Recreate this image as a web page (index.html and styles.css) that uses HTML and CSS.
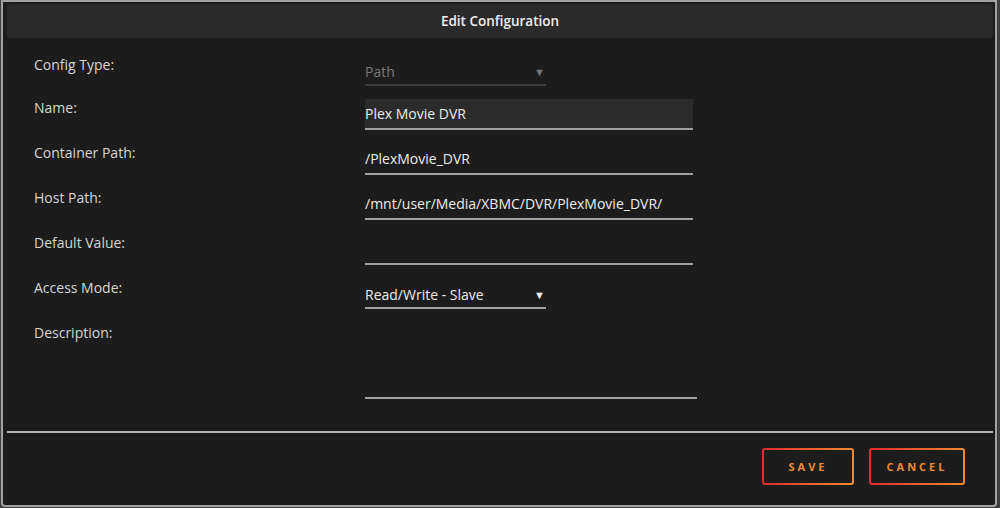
FILE: index.html
```html
<!DOCTYPE html>
<html lang="en">
<head>
    <meta charset="UTF-8">
    <title>Edit Configuration</title>
    <link rel="stylesheet" href="styles.css">
</head>
<body>
    <div class="dialog">
        <div class="dialog-title">Edit Configuration</div>
        <div class="config-form">
            <div class="form-row first">
                <label>Config Type:</label>
                <div class="select-box disabled">
                    <span>Path</span>
                    <span class="arrow">&#9660;</span>
                </div>
            </div>
            <div class="form-row">
                <label for="nameField">Name:</label>
                <input type="text" id="nameField" class="text-field active" value="Plex Movie DVR" autofocus>
            </div>
            <div class="form-row">
                <label for="containerField">Container Path:</label>
                <input type="text" id="containerField" class="text-field" value="/PlexMovie_DVR">
            </div>
            <div class="form-row">
                <label for="hostField">Host Path:</label>
                <input type="text" id="hostField" class="text-field" value="/mnt/user/Media/XBMC/DVR/PlexMovie_DVR/">
            </div>
            <div class="form-row">
                <label for="defaultField">Default Value:</label>
                <input type="text" id="defaultField" class="text-field" value="">
            </div>
            <div class="form-row">
                <label>Access Mode:</label>
                <div class="select-box">
                    <span>Read/Write - Slave</span>
                    <span class="arrow">&#9660;</span>
                </div>
            </div>
            <div class="form-row desc">
                <label for="descField">Description:</label>
                <textarea id="descField" class="text-area"></textarea>
            </div>
        </div>
        <div class="dialog-buttons">
            <button class="grad-button save">SAVE</button>
            <button class="grad-button cancel">CANCEL</button>
        </div>
    </div>
</body>
</html>
```

FILE: styles.css
```css
html, body {
    margin: 0;
    padding: 0;
}
body {
    background-color: #3e3e3e;
    font-family: 'Open Sans', 'Liberation Sans', sans-serif;
    width: 1000px;
    height: 508px;
    overflow: hidden;
}
.dialog {
    box-sizing: border-box;
    width: 996px;
    height: 507px;
    margin-left: 1px;
    background-color: #1c1c1c;
    border: 2px solid #a2a2a2;
    border-radius: 0 0 4px 4px;
    display: flex;
    flex-direction: column;
}
.dialog-title {
    margin: 2px 2px 0 4px;
    height: 34px;
    line-height: 34px;
    background-color: #2a2a2a;
    border-radius: 4px;
    text-align: center;
    color: #f0f0f0;
    font-size: 13.5px;
    font-weight: 600;
}
.config-form {
    padding: 14px 0 0 27px;
    border-bottom: 2px solid #b4b4b4;
    margin: 0 2px 0 4px;
    padding-bottom: 31px;
}
.form-row {
    display: grid;
    grid-template-columns: 331px 328px;
    height: 45px;
}
.form-row.first {
    height: 43px;
}
.form-row label {
    color: #d6d6d6;
    font-size: 14px;
    line-height: 26px;
}
.text-field {
    box-sizing: border-box;
    margin-top: 4px;
    height: 31px;
    width: 328px;
    padding: 0;
    background: transparent;
    border: none;
    border-bottom: 2px solid #a0a0a0;
    color: #ececec;
    font-family: inherit;
    font-size: 14px;
    outline: none;
    caret-color: #ffffff;
}
.text-field.active {
    background-color: #2b2b2b;
}
.select-box {
    box-sizing: border-box;
    margin-top: 4px;
    height: 30px;
    width: 181px;
    border-bottom: 2px solid #a0a0a0;
    display: flex;
    align-items: center;
    justify-content: space-between;
    color: #ececec;
    font-size: 14px;
    padding-top: 2px;
}
.select-box .arrow {
    font-size: 11px;
    margin-right: 1px;
}
.select-box.disabled {
    color: #7a7a7a;
    border-bottom-color: #3c3c3c;
}
.form-row.desc {
    height: 80px;
}
.text-area {
    box-sizing: border-box;
    margin-top: 4px;
    width: 332px;
    height: 75px;
    padding: 0;
    background: transparent;
    border: none;
    border-bottom: 2px solid #a0a0a0;
    resize: none;
    outline: none;
    color: #ececec;
    font-family: inherit;
}
.dialog-buttons {
    display: flex;
    justify-content: flex-end;
    gap: 15px;
    padding: 15px 30px 0 0;
}
.grad-button {
    box-sizing: border-box;
    height: 37px;
    padding: 0;
    border: 2px solid transparent;
    border-radius: 3px;
    background:
        linear-gradient(#1c1c1c, #1c1c1c) padding-box,
        linear-gradient(90deg, #e22d2d, #f28a2e) border-box;
    color: #ef8a36;
    font-family: inherit;
    font-size: 11px;
    font-weight: 700;
    letter-spacing: 3px;
    cursor: pointer;
}
.grad-button.save {
    width: 92px;
}
.grad-button.cancel {
    width: 96px;
}
```
